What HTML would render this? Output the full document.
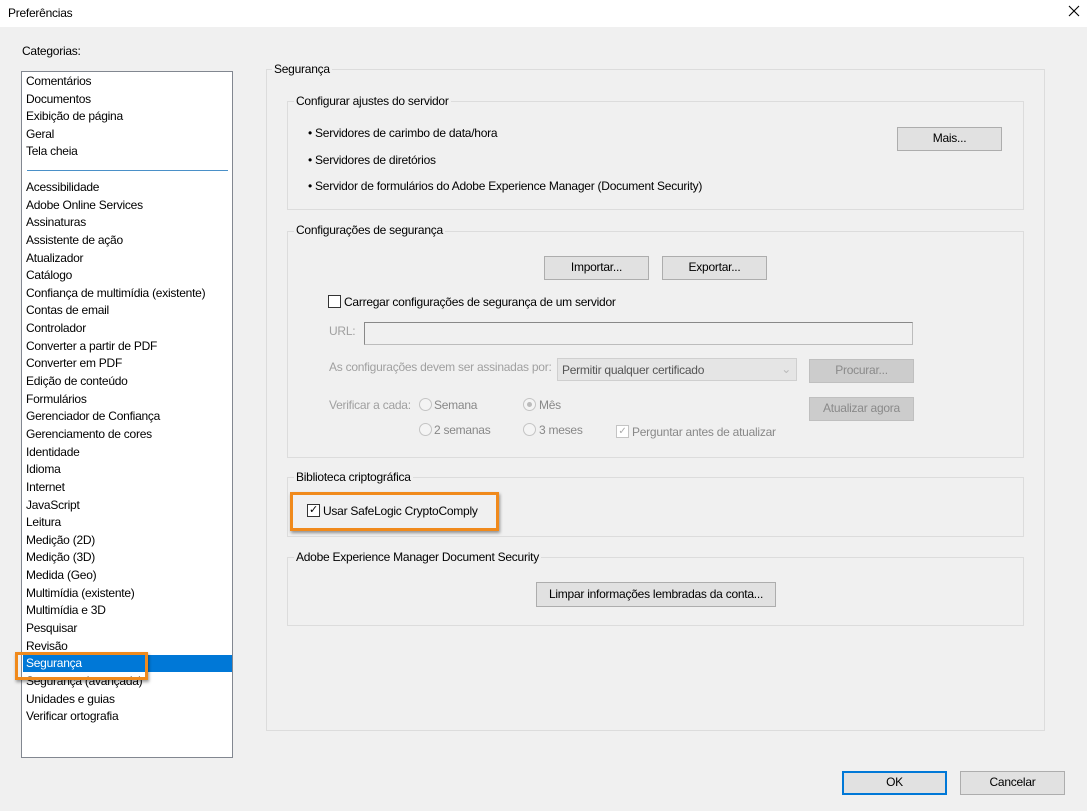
<!DOCTYPE html>
<html><head><meta charset="utf-8"><style>
*{box-sizing:border-box;margin:0;padding:0}
body{width:1087px;height:811px;background:#f0f0f0;font-family:"Liberation Sans",sans-serif;font-size:12px;color:#000;position:relative;overflow:hidden;letter-spacing:-0.25px}
.a{position:absolute;white-space:nowrap}
.title{left:0;top:0;width:1087px;height:27px;background:#fff}
.grp{position:absolute;border:1px solid #dcdcdc}
.lbl{position:absolute;background:#f0f0f0;padding:0 2px;line-height:14px}
.btn{position:absolute;background:#e1e1e1;border:1px solid #adadad;text-align:center;line-height:21px}
.dis{color:#a0a0a0}
.dbtn{position:absolute;background:#cccccc;border:1px solid #bfbfbf;color:#8a8a8a;text-align:center;line-height:21px}
.list{position:absolute;left:21px;top:71px;width:212px;height:687px;background:#fff;border:1px solid #828790}
.it{position:absolute;left:4px;line-height:17px}
.cb{position:absolute;width:13px;height:13px;border:1px solid #333;background:#fff}
.rd{position:absolute;width:13px;height:13px;border:1px solid #c4c4c4;border-radius:50%;background:#f4f4f4}
</style></head><body>
<div class="a title"></div>
<div class="a" style="left:8px;top:6px">Preferências</div>
<svg class="a" style="left:1068px;top:5px" width="12" height="12" viewBox="0 0 12 12"><path d="M1 1L11 11M11 1L1 11" stroke="#000" stroke-width="1.1"/></svg>
<div class="a" style="left:22px;top:44px">Categorias:</div>

<div class="list">
<div class="it" style="top:1px">Comentários</div>
<div class="it" style="top:18.6px">Documentos</div>
<div class="it" style="top:36.2px">Exibição de página</div>
<div class="it" style="top:53.8px">Geral</div>
<div class="it" style="top:71.4px">Tela cheia</div>
<div style="position:absolute;left:5px;top:98px;width:201px;height:1px;background:#4a90c8"></div>
<div style="position:absolute;left:1px;top:583px;width:209px;height:17px;background:#0078d7"></div>
<div id="L2"></div>
</div>
<script>
var n=["Acessibilidade","Adobe Online Services","Assinaturas","Assistente de ação","Atualizador","Catálogo","Confiança de multimídia (existente)","Contas de email","Controlador","Converter a partir de PDF","Converter em PDF","Edição de conteúdo","Formulários","Gerenciador de Confiança","Gerenciamento de cores","Identidade","Idioma","Internet","JavaScript","Leitura","Medição (2D)","Medição (3D)","Medida (Geo)","Multimídia (existente)","Multimídia e 3D","Pesquisar","Revisão","Segurança","Segurança (avançada)","Unidades e guias","Verificar ortografia"];
var h="";for(var i=0;i<n.length;i++){h+='<div class="it" style="top:'+(107+i*17.64)+'px;'+(i==27?'color:#fff':'')+'">'+n[i]+'</div>';}
document.getElementById("L2").outerHTML=h;
</script>
<div class="a" style="left:15px;top:652px;width:133px;height:28px;border:3px solid #f08a1c;box-shadow:1px 2px 3px rgba(0,0,0,.4)"></div>

<div class="grp" style="left:266px;top:69px;width:779px;height:662px"></div>
<div class="lbl" style="left:272px;top:62px">Segurança</div>

<div class="grp" style="left:287px;top:101px;width:737px;height:109px"></div>
<div class="lbl" style="left:294px;top:94px">Configurar ajustes do servidor</div>
<div class="a" style="left:308px;top:126px">• Servidores de carimbo de data/hora</div>
<div class="a" style="left:308px;top:153px">• Servidores de diretórios</div>
<div class="a" style="left:308px;top:179px">• Servidor de formulários do Adobe Experience Manager (Document Security)</div>
<div class="btn" style="left:897px;top:127px;width:105px;height:24px">Mais...</div>

<div class="grp" style="left:287px;top:231px;width:737px;height:227px"></div>
<div class="lbl" style="left:294px;top:223px">Configurações de segurança</div>
<div class="btn" style="left:544px;top:256px;width:105px;height:24px">Importar...</div>
<div class="btn" style="left:662px;top:256px;width:105px;height:24px">Exportar...</div>
<div class="cb" style="left:328px;top:295px"></div>
<div class="a" style="left:344px;top:295px">Carregar configurações de segurança de um servidor</div>
<div class="a dis" style="left:329px;top:324px">URL:</div>
<div class="a" style="left:364px;top:322px;width:549px;height:23px;border:1px solid #bcbcbc;border-top-color:#888;border-left-color:#888;background:#f0f0f0"></div>
<div class="a dis" style="left:329px;top:360px">As configurações devem ser assinadas por:</div>
<div class="a" style="left:557px;top:358px;width:240px;height:23px;border:1px solid #cfcfcf;background:#e5e5e5;padding:4px 4px;color:#555">Permitir qualquer certificado<span style="position:absolute;right:5px;top:3px;color:#bbb">⌄</span></div>
<div class="dbtn" style="left:809px;top:359px;width:105px;height:24px">Procurar...</div>
<div class="a dis" style="left:329px;top:398px">Verificar a cada:</div>
<div class="rd" style="left:419px;top:398px"></div><div class="a dis" style="left:434px;top:398px;color:#888">Semana</div>
<div class="rd" style="left:523px;top:398px"><div style="position:absolute;left:3px;top:3px;width:5px;height:5px;border-radius:50%;background:#bbb"></div></div><div class="a" style="left:539px;top:398px;color:#888">Mês</div>
<div class="rd" style="left:419px;top:423px"></div><div class="a" style="left:434px;top:423px;color:#888">2 semanas</div>
<div class="rd" style="left:523px;top:423px"></div><div class="a" style="left:539px;top:423px;color:#888">3 meses</div>
<div class="cb" style="left:616px;top:425px;border-color:#c4c4c4;color:#aaa;font-size:10px;line-height:11px;text-align:center">✓</div>
<div class="a" style="left:632px;top:425px;color:#888">Perguntar antes de atualizar</div>
<div class="dbtn" style="left:809px;top:397px;width:105px;height:24px">Atualizar agora</div>

<div class="grp" style="left:287px;top:477px;width:737px;height:60px"></div>
<div class="lbl" style="left:294px;top:470px">Biblioteca criptográfica</div>
<div class="a" style="left:290px;top:492px;width:209px;height:39px;border:3px solid #f08a1c;box-shadow:1px 2px 3px rgba(0,0,0,.4)"></div>
<div class="cb" style="left:307px;top:504px;font-size:11px;line-height:11px;text-align:center">✓</div>
<div class="a" style="left:323px;top:504px">Usar SafeLogic CryptoComply</div>

<div class="grp" style="left:287px;top:557px;width:737px;height:69px"></div>
<div class="lbl" style="left:294px;top:550px">Adobe Experience Manager Document Security</div>
<div class="btn" style="left:536px;top:582px;width:240px;height:25px;line-height:22px">Limpar informações lembradas da conta...</div>

<div class="btn" style="left:842px;top:771px;width:105px;height:24px;border:2px solid #0078d7;line-height:19px">OK</div>
<div class="btn" style="left:960px;top:771px;width:105px;height:24px">Cancelar</div>
</body></html>
